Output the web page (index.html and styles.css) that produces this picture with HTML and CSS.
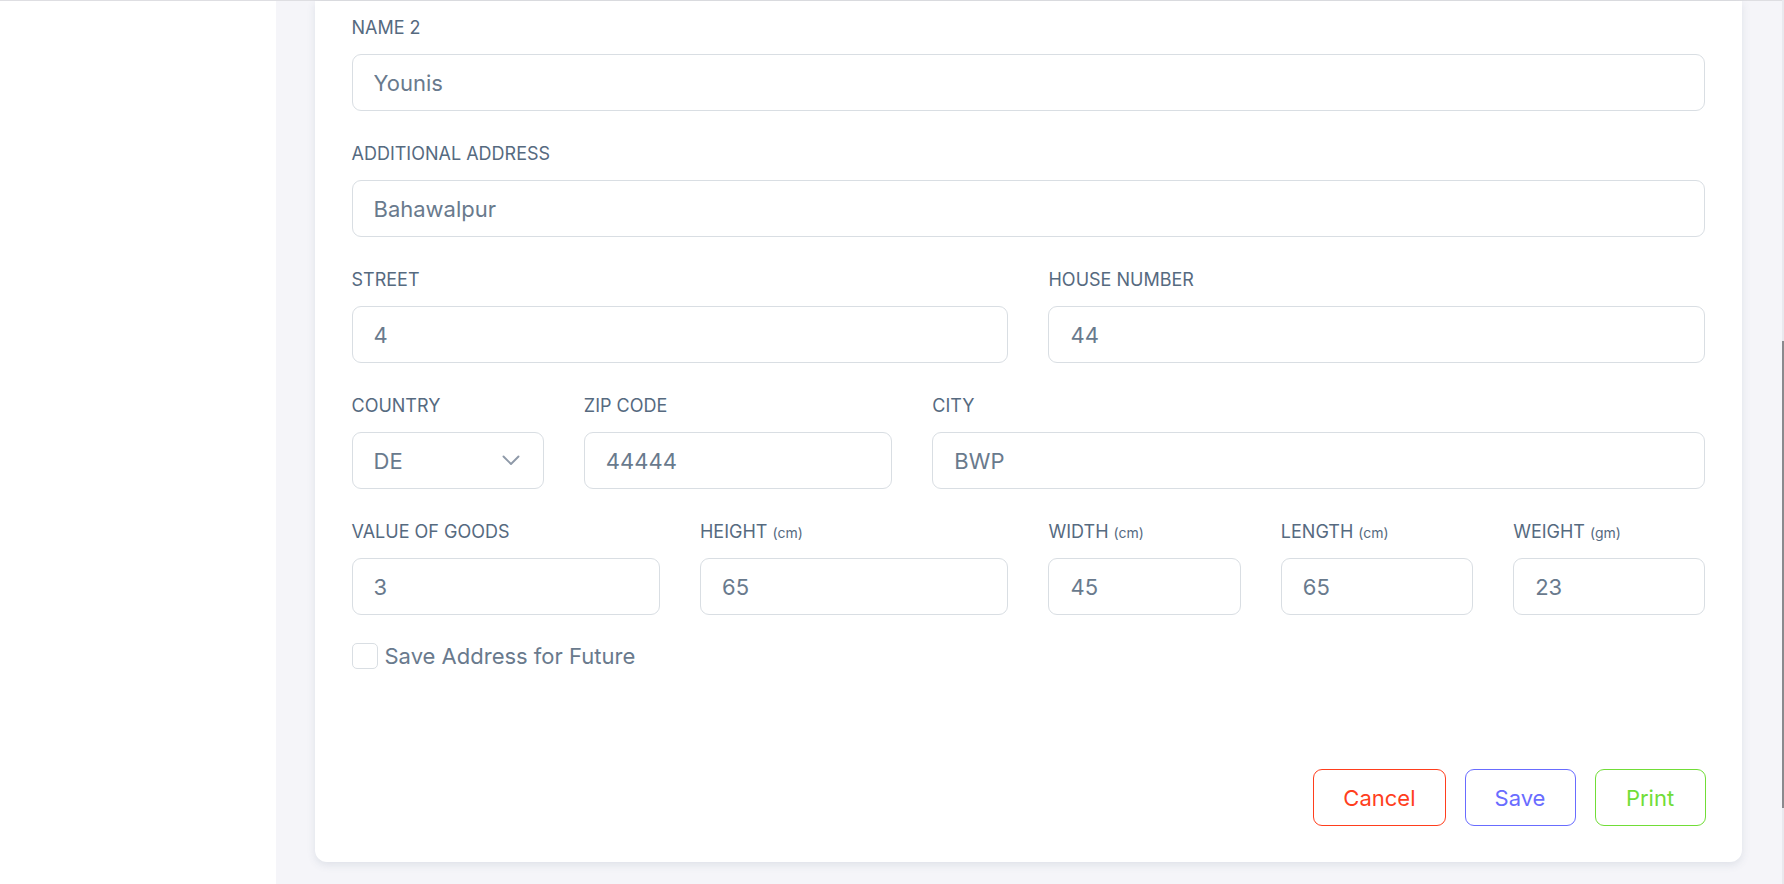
FILE: index.html
```html
<!DOCTYPE html>
<html lang="en">
<head>
<meta charset="utf-8">
<title>Shipment Address</title>
<link rel="stylesheet" href="styles.css">
</head>
<body>
<div class="layout">
  <aside class="sidebar"></aside>
  <main class="content">
    <section class="card">
      <form class="form-grid">
        <div class="field span-12">
          <label class="form-label">Name 2</label>
          <input class="form-control" type="text" value="Younis">
        </div>
        <div class="field span-12">
          <label class="form-label">Additional Address</label>
          <input class="form-control" type="text" value="Bahawalpur">
        </div>
        <div class="field span-6">
          <label class="form-label">Street</label>
          <input class="form-control" type="text" value="4">
        </div>
        <div class="field span-6">
          <label class="form-label">House Number</label>
          <input class="form-control" type="text" value="44">
        </div>
        <div class="field span-2">
          <label class="form-label">Country</label>
          <div class="select-wrap">
            <select class="form-control form-select">
              <option>DE</option>
            </select>
            <svg class="chevron" width="18" height="11" viewBox="0 0 18 11" aria-hidden="true">
              <polyline points="1.5,1.5 9,9 16.5,1.5" fill="none" stroke="#8e99a8" stroke-width="1.9" stroke-linecap="round" stroke-linejoin="round"/>
            </svg>
          </div>
        </div>
        <div class="field span-3">
          <label class="form-label">Zip Code</label>
          <input class="form-control" type="text" value="44444">
        </div>
        <div class="field span-7">
          <label class="form-label">City</label>
          <input class="form-control" type="text" value="BWP">
        </div>
        <div class="field span-3">
          <label class="form-label">Value of Goods</label>
          <input class="form-control" type="text" value="3">
        </div>
        <div class="field span-3">
          <label class="form-label">Height <small>(cm)</small></label>
          <input class="form-control" type="text" value="65">
        </div>
        <div class="field span-2">
          <label class="form-label">Width <small>(cm)</small></label>
          <input class="form-control" type="text" value="45">
        </div>
        <div class="field span-2">
          <label class="form-label">Length <small>(cm)</small></label>
          <input class="form-control" type="text" value="65">
        </div>
        <div class="field span-2">
          <label class="form-label">Weight <small>(gm)</small></label>
          <input class="form-control" type="text" value="23">
        </div>
      </form>
      <label class="check">
        <input type="checkbox" class="check-input">
        <span>Save Address for Future</span>
      </label>
      <div class="actions">
        <button type="button" class="btn btn-danger">Cancel</button>
        <button type="button" class="btn btn-primary">Save</button>
        <button type="button" class="btn btn-success">Print</button>
      </div>
    </section>
  </main>
</div>
<div class="scroll-track"><div class="scroll-thumb"></div></div>
</body>
</html>
```
FILE: styles.css
```css
* { box-sizing: border-box; }
html, body { margin: 0; height: 100%; }
body {
  font-family: Inter, "Noto Sans", sans-serif;
  background: #f5f5f9;
  overflow: hidden;
}
.layout {
  display: flex;
  align-items: stretch;
  min-height: 884px;
  border-top: 1px solid #dedee2;
}
.sidebar {
  width: 276px;
  flex: 0 0 276px;
  background: #fff;
}
.content {
  flex: 1;
  padding: 0 42px 22px 39px;
  display: flex;
  flex-direction: column;
  justify-content: flex-end;
}
.card {
  background: #fff;
  border-radius: 0 0 12px 12px;
  box-shadow: 0 3px 9px 0 rgba(67, 89, 113, 0.12);
  padding: 13.5px 36.5px 36px;
}
.form-grid {
  display: grid;
  grid-template-columns: repeat(12, 1fr);
  column-gap: 40px;
  row-gap: 29.5px;
  margin: 0;
}
.span-12 { grid-column: span 12; }
.span-7 { grid-column: span 7; }
.span-6 { grid-column: span 6; }
.span-3 { grid-column: span 3; }
.span-2 { grid-column: span 2; }
.field { display: flex; flex-direction: column; min-width: 0; }
.form-label {
  display: block;
  font-size: 18px;
  line-height: 26px;
  height: 26px;
  margin-bottom: 13.5px;
  color: #566a7f;
  text-transform: uppercase;
  white-space: nowrap;
}
.form-label small {
  font-size: 14px;
  text-transform: none;
}
.form-control {
  display: block;
  width: 100%;
  height: 57px;
  margin: 0;
  padding: 0 21px;
  font-family: inherit;
  font-size: 22px;
  color: #697a8d;
  background: #fff;
  border: 1px solid #d9dee3;
  border-radius: 9px;
  outline: none;
}
.select-wrap { position: relative; }
.form-select {
  appearance: none;
  -webkit-appearance: none;
  padding-right: 50px;
}
.chevron {
  position: absolute;
  right: 24px;
  top: 23px;
  pointer-events: none;
}
.check {
  display: flex;
  align-items: center;
  margin-top: 27.5px;
  height: 26px;
  gap: 7px;
  font-size: 22px;
  line-height: 26px;
  color: #697a8d;
}
.check-input {
  appearance: none;
  -webkit-appearance: none;
  width: 26px;
  height: 26px;
  margin: 0;
  border: 1px solid #d9dee3;
  border-radius: 5px;
  background: #fff;
}
.actions {
  display: flex;
  justify-content: flex-end;
  gap: 19px;
  margin-top: 100.5px;
}
.btn {
  height: 57px;
  padding: 0 29px;
  min-width: 111px;
  font-family: inherit;
  font-size: 22px;
  background: #fff;
  border: 1px solid currentColor;
  border-radius: 9px;
}
.btn-danger { color: #ff3e1d; }
.btn-primary { color: #696cff; }
.btn-success { color: #71dd37; }
.scroll-track {
  position: fixed;
  top: 0;
  right: 0;
  width: 2px;
  height: 100%;
  background: #e9e9ee;
}
.scroll-thumb {
  position: absolute;
  top: 341px;
  left: 0;
  width: 2px;
  height: 467px;
  background: #8a8a8e;
}
```
